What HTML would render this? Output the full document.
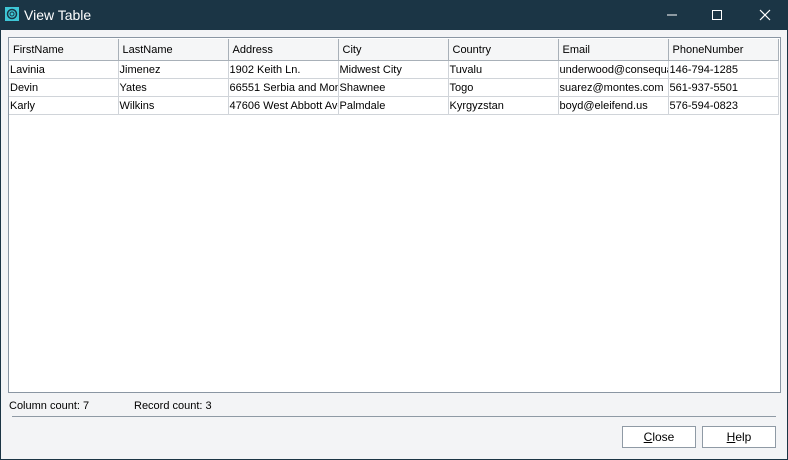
<!DOCTYPE html>
<html><head><style>
body{margin:0;width:788px;height:460px;background:#1b3545;font-family:"Liberation Sans",sans-serif;font-size:11px;color:#000;overflow:hidden;position:relative}
#win{position:absolute;left:1px;top:30px;width:786px;height:429px;background:#f3f4f6}
.title{position:absolute;left:24px;top:7px;color:#fff;font-size:14px}
.tb{position:absolute;top:0;height:30px;color:#fff}
#grid{position:absolute;left:7px;top:7px;width:771px;height:354px;border:1px solid #8a96a3;background:#fff;overflow:hidden}
table{border-collapse:collapse;table-layout:fixed;position:absolute;left:0px;top:1px;width:769px}
td,th{border-right:1px solid #d0d4d9;border-bottom:1px solid #d0d4d9;white-space:nowrap;overflow:hidden;padding:0 0 0 1px;font-weight:normal;text-align:left;height:17px;font-size:11px}
th{height:21px;background:#f5f6f7;border-color:#a8b0b8;padding-left:4px}
.st{position:absolute;top:370px}
.sep{position:absolute;left:11px;top:386px;width:764px;height:1px;background:#8f9aa5}
.btn{position:absolute;top:396px;width:72px;height:20px;border:1px solid #8f9aa5;background:#fff;text-align:center;line-height:20px;font-size:12px}
</style></head><body>
<svg style="position:absolute;left:5px;top:7px" width="14" height="14"><rect width="14" height="14" fill="#3ec6d6"/><circle cx="7" cy="7" r="4.5" fill="none" stroke="#1b3545" stroke-width="1.5"/><circle cx="7" cy="7" r="2" fill="none" stroke="#1b3545"/></svg>
<div class="title">View Table</div>
<svg class="tb" style="left:660px" width="128" height="30"><line x1="7" y1="15" x2="17" y2="15" stroke="#fff"/><rect x="52.5" y="10.5" width="9" height="9" fill="none" stroke="#fff"/><path d="M100 10L110 20M110 10L100 20" stroke="#fff" stroke-width="1.2"/></svg>
<div id="win">
<div id="grid"><table>
<colgroup><col style="width:109px"><col style="width:110px"><col style="width:110px"><col style="width:110px"><col style="width:110px"><col style="width:110px"><col style="width:110px"></colgroup>
<tr><th>FirstName</th><th>LastName</th><th>Address</th><th>City</th><th>Country</th><th>Email</th><th>PhoneNumber</th></tr>
<tr><td>Lavinia</td><td>Jimenez</td><td>1902 Keith Ln.</td><td>Midwest City</td><td>Tuvalu</td><td>underwood@consequat.com</td><td>146-794-1285</td></tr>
<tr><td>Devin</td><td>Yates</td><td>66551 Serbia and Montenegro</td><td>Shawnee</td><td>Togo</td><td>suarez@montes.com</td><td>561-937-5501</td></tr>
<tr><td>Karly</td><td>Wilkins</td><td>47606 West Abbott Ave</td><td>Palmdale</td><td>Kyrgyzstan</td><td>boyd@eleifend.us</td><td>576-594-0823</td></tr>
</table></div>
<div class="st" style="left:8px">Column count: 7</div>
<div class="st" style="left:133px">Record count: 3</div>
<div class="sep"></div>
<div class="btn" style="left:621px"><u>C</u>lose</div>
<div class="btn" style="left:701px"><u>H</u>elp</div>
</div>
</body></html>
